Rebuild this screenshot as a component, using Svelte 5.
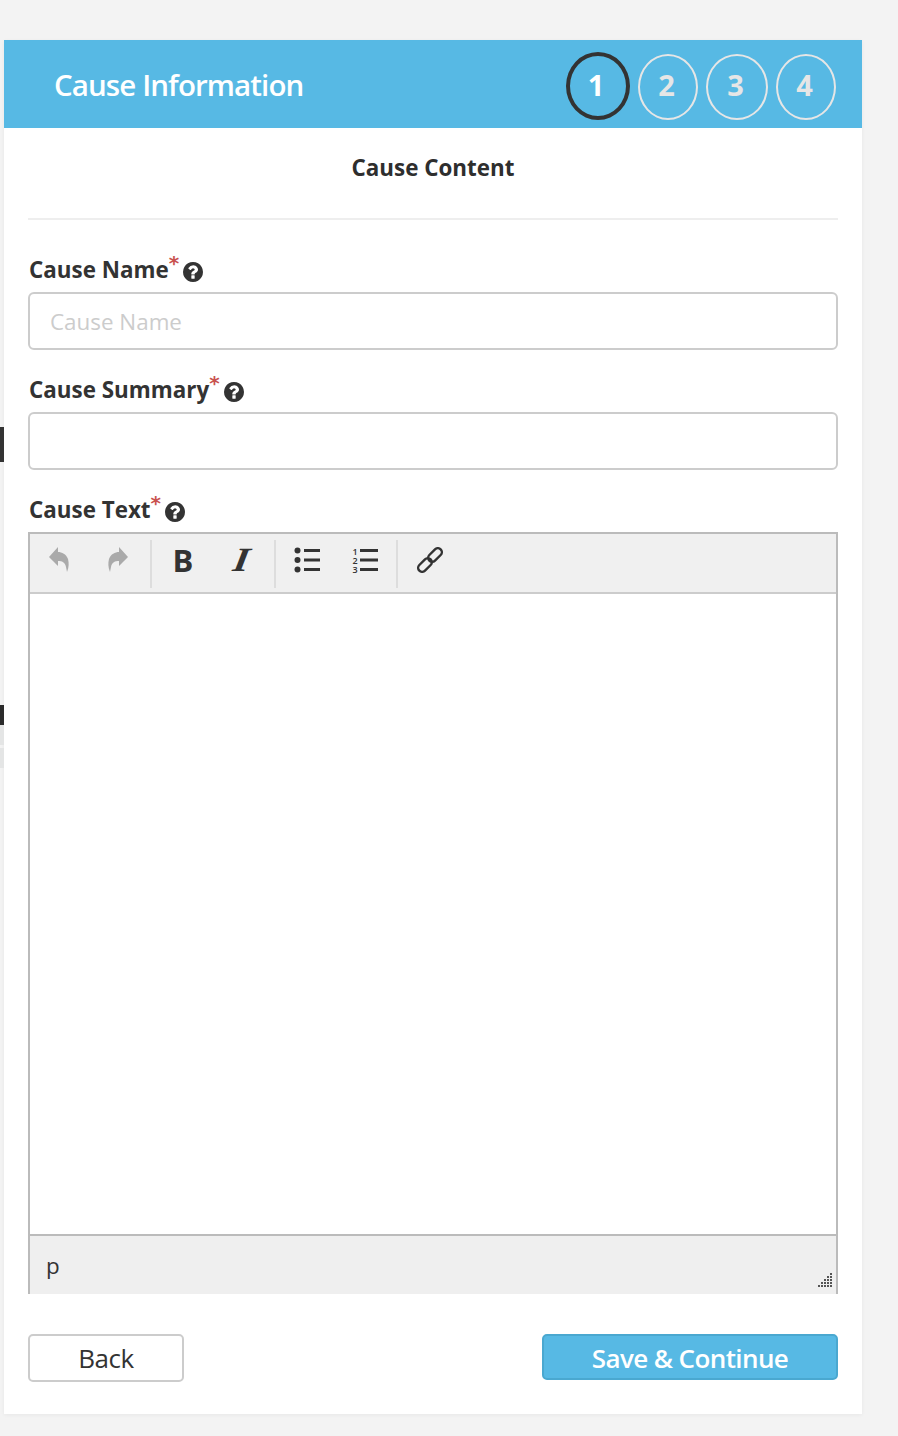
<script>
  const steps = [1, 2, 3, 4];
  const fields = [
    { label: 'Cause Name', placeholder: 'Cause Name' },
    { label: 'Cause Summary', placeholder: '' }
  ];
  const qPath = 'M896 1248v-192q0-14-9-23t-23-9h-192q-14 0-23 9t-9 23v192q0 14 9 23t23 9h192q14 0 23-9t9-23zm256-672q0-88-55.5-163t-138.5-116-170-41q-243 0-371 213-15 24 8 42l132 100q7 6 19 6 16 0 25-12 53-68 86-92 34-24 86-24 48 0 85.5 26t37.5 59q0 38-20 61t-68 45q-63 28-115.5 86.5t-52.5 125.5v36q0 14 9 23t23 9h192q14 0 23-9t9-23q0-19 21.5-49.5t54.5-49.5q32-18 49-28.5t46-35 44.5-48 28-60.5 12.5-81zm384 192q0 209-103 385.5t-279.5 279.5-385.5 103-385.5-103-279.5-279.5-103-385.5 103-385.5 279.5-279.5 385.5-103 385.5 103 279.5 279.5 103 385.5z';
  const arrow = 'M10 0 1 10l9 9v-5c4 0 7 1 8 6l1 5c2-5 2-9 1-13-2-5-6-7-10-7z';
  const grip = [];
  for (let row = 0; row < 5; row++) {
    for (let col = 4 - row; col < 5; col++) grip.push({ x: col * 3, y: row * 3 });
  }
</script>

{#snippet help()}
  <svg class="help" viewBox="0 0 1536 1536" aria-hidden="true"><path d={qPath} fill="#333" /></svg>
{/snippet}

<div class="side side-a"></div>
<div class="side side-b"></div>

<div class="page">
  <div class="card">
    <header class="head">
      <h1>Cause Information</h1>
      <div class="steps">
        {#each steps as s}
          <span class="step" class:active={s === 1}>{s}</span>
        {/each}
      </div>
    </header>

    <div class="body">
      <h2>Cause Content</h2>
      <hr />

      {#each fields as f}
        <div class="label">{f.label}<sup>*</sup>{@render help()}</div>
        <input type="text" placeholder={f.placeholder} />
      {/each}

      <div class="label">Cause Text<sup>*</sup>{@render help()}</div>
      <div class="editor">
        <div class="toolbar">
          <div class="group first">
            <button aria-label="Undo">
              <svg width="22" height="26" viewBox="0 0 22 26"><path d={arrow} fill="#aaa" /></svg>
            </button>
            <button aria-label="Redo">
              <svg class="flip" width="22" height="26" viewBox="0 0 22 26"><path d={arrow} fill="#aaa" /></svg>
            </button>
          </div>
          <div class="group">
            <button class="glyph bold">B</button>
            <button class="glyph ital">I</button>
          </div>
          <div class="group">
            <button aria-label="Bullet list">
              <svg width="26" height="26" viewBox="0 0 26 26" fill="#333">
                <circle cx="3.500" cy="3.500" r="3" /><circle cx="3.500" cy="13" r="3" /><circle cx="3.500" cy="22.500" r="3" />
                <rect x="10" y="2" width="16" height="3" /><rect x="10" y="11.500" width="16" height="3" /><rect x="10" y="21" width="16" height="3" />
              </svg>
            </button>
            <button class="numlist" aria-label="Numbered list">
              <span class="digits">1 2 3</span>
              <svg width="18" height="26" viewBox="0 0 18 26" fill="#333">
                <rect y="2" width="18" height="3" /><rect y="11.500" width="18" height="3" /><rect y="21" width="18" height="3" />
              </svg>
            </button>
          </div>
          <div class="group last">
            <button aria-label="Link">
              <svg width="26" height="26" viewBox="0 0 26 26" fill="none" stroke="#333" stroke-width="2.400">
                <rect x="10" y="4" width="16" height="8" rx="4" transform="rotate(-45 18 8)" />
                <rect x="0" y="14" width="16" height="8" rx="4" transform="rotate(-45 8 18)" />
              </svg>
            </button>
          </div>
        </div>
        <div class="area"></div>
        <div class="status">
          <span>p</span>
          <svg class="grip" width="15" height="15" viewBox="0 0 15 15" fill="#555">
            {#each grip as d}
              <rect x={d.x + 1} y={d.y + 1} width="2" height="2" />
            {/each}
          </svg>
        </div>
      </div>

      <div class="actions">
        <button class="back">Back</button>
        <button class="save">Save &amp; Continue</button>
      </div>
    </div>
  </div>
</div>

<style>
  :global(body) {
    background: #f3f3f3;
    font-family: "Open Sans", sans-serif;
    color: #333;
  }

  .page {
    padding: 40px 36px 22px 4px;
    width: 858px;
  }

  .side {
    position: absolute;
    left: 0;
    width: 4px;
  }

  .side-a {
    top: 427px;
    height: 35px;
    background: #333;
  }

  .side-b {
    top: 705px;
    height: 20px;
    background: #2b2b2b;
    box-shadow: 0 20px 0 0 #e4e5e5, 0 43px 0 0 #e4e5e5;
  }

  .card {
    background: #fff;
    height: 1374px;
    box-shadow: 0 1px 4px rgba(0, 0, 0, 0.05);
  }

  .head {
    display: flex;
    align-items: center;
    justify-content: space-between;
    height: 88px;
    padding: 0 26px 0 50px;
    background: #57b9e4;
  }

  h1 {
    margin: 0;
    padding-top: 1px;
    font-size: 29.5px;
    font-weight: 600;
    letter-spacing: -0.9px;
    color: #fff;
  }

  .steps {
    display: flex;
    align-items: flex-end;
    gap: 8px;
    height: 68px;
    margin-top: 4px;
  }

  .step {
    display: flex;
    align-items: center;
    justify-content: center;
    box-sizing: border-box;
    width: 60px;
    height: 66px;
    padding: 0 3px 6px 0;
    border: 2px solid #e6e6e6;
    border-radius: 50%;
    font-size: 29px;
    font-weight: 700;
    color: #e6e6e6;
  }

  .step:nth-child(3) {
    width: 62px;
  }

  .step.active {
    width: 64px;
    height: 68px;
    padding: 0 4px 4px 0;
    border: 4px solid #333;
    color: #fff;
  }

  .body {
    padding: 0 24px;
  }

  h2 {
    margin: 0;
    padding-top: 24px;
    height: 66px;
    box-sizing: border-box;
    font-size: 22.4px;
    line-height: 32px;
    font-weight: 700;
    text-align: center;
    color: #2e2e2e;
  }

  hr {
    margin: 24px 0 0;
    height: 2px;
    border: 0;
    background: #eee;
  }

  .label {
    display: flex;
    align-items: flex-start;
    height: 32px;
    margin: 32px 0 8px 1px;
    font-size: 22.4px;
    line-height: 36px;
    font-weight: 700;
    color: #333;
  }

  input + .label {
    margin-top: 22px;
  }

  sup {
    font-family: "DejaVu Sans", sans-serif;
    font-size: 20px;
    line-height: 20px;
    margin-top: 1px;
    font-weight: 700;
    color: #c9524f;
    vertical-align: baseline;
  }

  .help {
    width: 20px;
    height: 20px;
    margin: 10px 0 0 4px;
  }

  input {
    display: block;
    box-sizing: border-box;
    width: 100%;
    height: 58px;
    padding: 0 20px;
    border: 2px solid #ccc;
    border-radius: 6px;
    outline: none;
    font: 22.4px "Open Sans", sans-serif;
  }

  input::placeholder {
    color: #ccc;
    opacity: 1;
  }

  .editor {
    box-sizing: border-box;
    height: 762px;
    display: flex;
    flex-direction: column;
    border: 2px solid #bbb;
    border-bottom: 0;
  }

  .toolbar {
    display: flex;
    align-items: center;
    flex: none;
    height: 58px;
    box-sizing: border-box;
    padding: 5px 0 3px;
    background: #f0f0f0;
  }

  .group {
    display: flex;
    box-sizing: border-box;
    width: 124px;
    height: 48px;
    padding-left: 2px;
    border-right: 2px solid #ddd;
  }

  .group.first {
    width: 122px;
    padding-left: 0;
  }

  .group:nth-child(3) {
    width: 122px;
  }

  .group.last {
    border: 0;
    padding-left: 3px;
  }

  button {
    font-family: "Open Sans", sans-serif;
  }

  .group button {
    display: flex;
    align-items: center;
    justify-content: center;
    box-sizing: border-box;
    width: 58px;
    height: 48px;
    padding: 0 0 8px;
    border: 0;
    background: none;
    color: #333;
  }

  .group button:nth-child(2) .flip {
    transform: scaleX(-1);
    margin-left: 2px;
  }

  .group .glyph {
    font-size: 31px;
    line-height: 40px;
    font-weight: 700;
  }

  .group .ital {
    font-family: "Liberation Serif", serif;
    font-style: italic;
    font-size: 34px;
    transform: scaleX(1.2) skewX(-8deg);
  }

  .group .numlist {
    gap: 2px;
  }

  .digits {
    display: block;
    width: 6px;
    height: 27px;
    font-size: 9px;
    line-height: 9px;
    font-weight: 600;
    text-align: center;
  }

  .area {
    flex: 1;
    background: #fff;
    border-top: 2px solid #ccc;
  }

  .status {
    position: relative;
    flex: none;
    height: 60px;
    box-sizing: border-box;
    padding: 12px 0 0 16px;
    background: #efefef;
    border-top: 2px solid #bbb;
    font-size: 22.4px;
    line-height: 36px;
    color: #333;
  }

  .grip {
    position: absolute;
    right: 4px;
    bottom: 7px;
  }

  .actions {
    display: flex;
    justify-content: space-between;
    align-items: flex-start;
    margin-top: 40px;
  }

  .actions button {
    box-sizing: border-box;
    font-size: 26px;
    border-radius: 5px;
    letter-spacing: -0.5px;
    padding: 0;
  }

  .back {
    width: 156px;
    height: 48px;
    background: #fff;
    border: 2px solid #ccc;
    color: #333;
  }

  .actions .save {
    width: 296px;
    height: 46px;
    padding-top: 2px;
    letter-spacing: -0.6px;
    background: #57b9e4;
    border: 2px solid #4aa8d0;
    color: #fff;
    font-weight: 600;
  }
</style>
